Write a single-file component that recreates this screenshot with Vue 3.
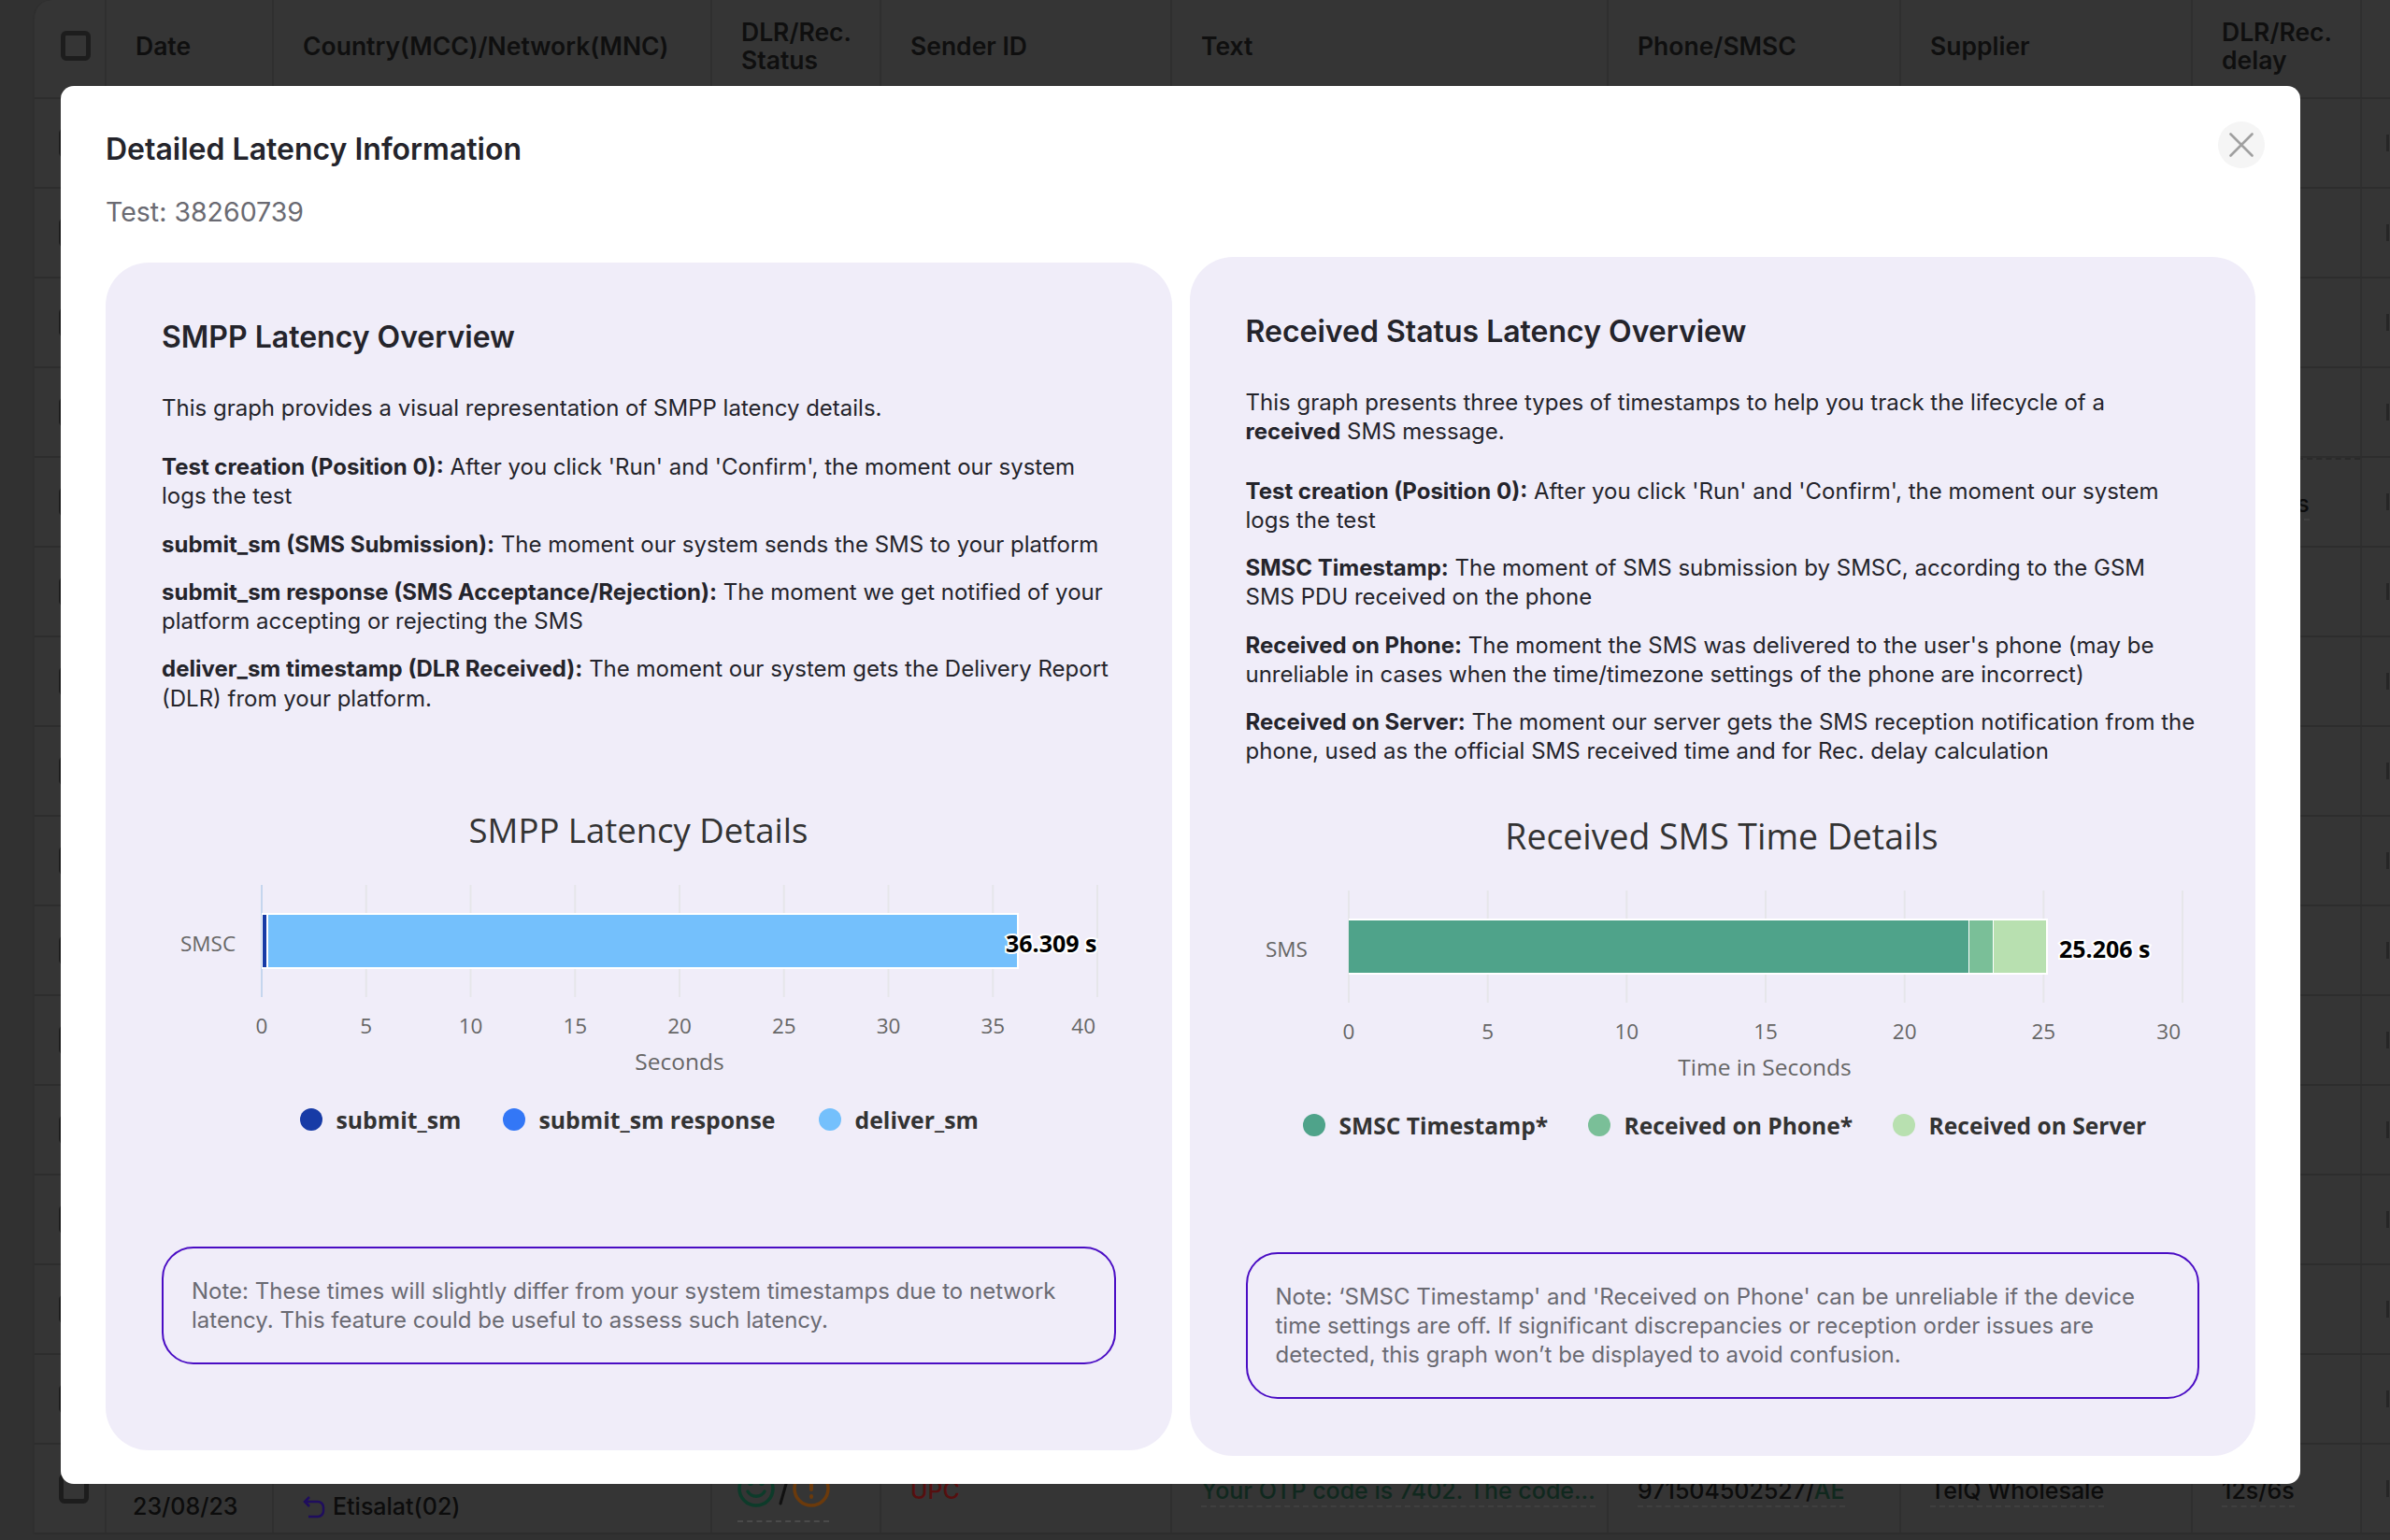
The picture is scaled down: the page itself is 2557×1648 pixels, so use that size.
<template>
  <div class="page">
    <!-- dimmed table behind the dialog -->
    <div class="table">
      <div class="table__head table__grid">
        <div class="cell cell--check"><span class="checkbox" /></div>
        <div v-for="col in columns" :key="col" class="cell">{{ col }}</div>
      </div>
      <div v-for="row in rows" :key="row.id" class="table__row table__grid">
        <div class="cell cell--check"><span class="checkbox" /></div>
        <div class="cell" />
        <div class="cell" />
        <div class="cell" />
        <div class="cell" />
        <div class="cell" />
        <div class="cell" />
        <div class="cell" />
        <div class="cell" :class="{ 'cell--dashed-top': row.delay }">
          <span v-if="row.delay" class="dotted">{{ row.delay }}</span>
        </div>
        <div class="cell cell--tail"><span class="tail" /></div>
      </div>
      <div class="table__row table__grid">
        <div class="cell cell--check"><span class="checkbox" /></div>
        <div class="cell cell--low">23/08/23</div>
        <div class="cell cell--low cell--network">
          <svg width="26" height="26" viewBox="0 0 26 26" fill="none" stroke="#1f0d5e" stroke-width="2.5">
            <path d="M8 2 3 7l5 5M3 7h14a6 6 0 0 1 6 6v4a6 6 0 0 1-6 6H7" />
          </svg>
          Etisalat(02)
        </div>
        <div class="cell cell--status">
          <svg width="100" height="40" viewBox="0 0 100 40" fill="none" stroke-width="3.5" stroke-linecap="round">
            <circle cx="20" cy="20" r="18" stroke="#0d3b2a" />
            <path d="M11 23c4 7 14 7 18 0" stroke="#0d3b2a" />
            <circle cx="14" cy="14" r="1.2" stroke="#0d3b2a" />
            <circle cx="26" cy="14" r="1.2" stroke="#0d3b2a" />
            <path d="M54 8 46 36" stroke="#111" stroke-width="3" />
            <circle cx="79" cy="20" r="18" stroke="#6b3a0c" />
            <path d="M79 10v11M79 28v1" stroke="#6b3a0c" stroke-width="4" />
          </svg>
        </div>
        <div class="cell cell--sender">UPC</div>
        <div class="cell"><span class="dotted dotted--green">Your OTP code is 7402. The code...</span></div>
        <div class="cell"><span class="dotted">971504502527/<em>AE</em></span></div>
        <div class="cell"><span class="dotted">TelQ Wholesale</span></div>
        <div class="cell"><span class="dotted">12s/6s</span></div>
        <div class="cell cell--tail"><span class="tail" /></div>
      </div>
    </div>

    <div class="modal">
      <button class="modal__close" type="button">
        <svg width="26" height="26" viewBox="0 0 26 26" stroke="#a0a0a0" stroke-width="2.6" stroke-linecap="round">
          <path d="M1.5 1.5l23 23M24.5 1.5l-23 23" />
        </svg>
      </button>
      <h1 class="modal__title">Detailed Latency Information</h1>
      <div class="modal__sub">Test: 38260739</div>

      <div class="modal__cards">
        <section v-for="card in cards" :key="card.id" class="card" :class="`card--${card.id}`">
          <h2 class="card__title">{{ card.title }}</h2>
          <p class="card__intro">
            <template v-for="part in card.intro" :key="part.t">
              <strong v-if="part.b">{{ part.t }}</strong><template v-else>{{ part.t }}</template>
            </template>
          </p>
          <p v-for="item in card.items" :key="item.b" class="card__item">
            <strong>{{ item.b }}</strong> {{ item.t }}
          </p>

          <svg class="chart" width="1018" height="402" viewBox="0 0 1018 402">
            <text class="chart__title" x="509" y="60">{{ card.chart.title }}</text>
            <line
              v-for="(tick, i) in card.chart.ticks"
              :key="tick"
              :x1="tickX(card.chart, i)"
              :x2="tickX(card.chart, i)"
              y1="119"
              y2="239"
              :stroke="i === 0 ? card.chart.axisColor : '#e6e6ea'"
              stroke-width="2"
            />
            <text class="chart__axis" :x="card.chart.catX" y="181">{{ card.chart.cat }}</text>
            <rect
              :x="card.chart.x0"
              y="149"
              :width="card.chart.barEnd - card.chart.x0"
              height="60"
              fill="#fff"
            />
            <rect
              v-for="seg in card.chart.segments"
              :key="seg.color"
              :x="seg.from"
              y="151"
              :width="seg.to - seg.from"
              height="56"
              :fill="seg.color"
            />
            <text
              v-for="(tick, i) in card.chart.ticks"
              :key="`t${tick}`"
              class="chart__tick"
              :class="{ 'chart__tick--end': i === card.chart.ticks.length - 1 }"
              :x="tickX(card.chart, i)"
              y="269"
            >{{ tick }}</text>
            <text class="chart__name" :x="card.chart.nameCenter" y="307">{{ card.chart.name }}</text>
            <text class="chart__value" :x="card.chart.valueX" y="181">{{ card.chart.value }}</text>
            <g v-for="entry in card.chart.legend" :key="entry.label">
              <circle :cx="entry.x" cy="370" r="12" :fill="entry.color" />
              <text class="chart__legend" :x="entry.x + 26.5" y="370">{{ entry.label }}</text>
            </g>
          </svg>

          <div class="card__note">{{ card.note }}</div>
        </section>
      </div>
    </div>
  </div>
</template>

<script setup>
const columns = [
  'Date',
  'Country(MCC)/Network(MNC)',
  'DLR/Rec. Status',
  'Sender ID',
  'Text',
  'Phone/SMSC',
  'Supplier',
  'DLR/Rec. delay',
  ''
];

const rows = Array.from({ length: 15 }, (_, i) => ({
  id: i,
  delay: i === 4 ? '24s/18s' : ''
}));

const cards = [
  {
    id: 'smpp',
    title: 'SMPP Latency Overview',
    intro: [{ t: 'This graph provides a visual representation of SMPP latency details.' }],
    items: [
      { b: 'Test creation (Position 0):', t: "After you click 'Run' and 'Confirm', the moment our system logs the test" },
      { b: 'submit_sm (SMS Submission):', t: 'The moment our system sends the SMS to your platform' },
      { b: 'submit_sm response (SMS Acceptance/Rejection):', t: 'The moment we get notified of your platform accepting or rejecting the SMS' },
      { b: 'deliver_sm timestamp (DLR Received):', t: 'The moment our system gets the Delivery Report (DLR) from your platform.' }
    ],
    chart: {
      title: 'SMPP Latency Details',
      cat: 'SMSC',
      catX: 19,
      name: 'Seconds',
      nameCenter: 553,
      value: '36.309 s',
      valueX: 902,
      x0: 106,
      step: 111.75,
      barEnd: 916,
      axisColor: '#c5d6ee',
      ticks: [0, 5, 10, 15, 20, 25, 30, 35, 40],
      segments: [
        { from: 107, to: 111, color: '#173ba6' },
        { from: 111, to: 113, color: '#fff' },
        { from: 113, to: 914, color: '#74c0fc' }
      ],
      legend: [
        { x: 159, label: 'submit_sm', color: '#173ba6' },
        { x: 376, label: 'submit_sm response', color: '#3377f6' },
        { x: 714, label: 'deliver_sm', color: '#74c0fc' }
      ]
    },
    note: 'Note: These times will slightly differ from your system timestamps due to network latency. This feature could be useful to assess such latency.'
  },
  {
    id: 'received',
    title: 'Received Status Latency Overview',
    intro: [
      { t: 'This graph presents three types of timestamps to help you track the lifecycle of a ' },
      { t: 'received', b: true },
      { t: ' SMS message.' }
    ],
    items: [
      { b: 'Test creation (Position 0):', t: "After you click 'Run' and 'Confirm', the moment our system logs the test" },
      { b: 'SMSC Timestamp:', t: 'The moment of SMS submission by SMSC, according to the GSM SMS PDU received on the phone' },
      { b: 'Received on Phone:', t: "The moment the SMS was delivered to the user's phone (may be unreliable in cases when the time/timezone settings of the phone are incorrect)" },
      { b: 'Received on Server:', t: 'The moment our server gets the SMS reception notification from the phone, used as the official SMS received time and for Rec. delay calculation' }
    ],
    chart: {
      title: 'Received SMS Time Details',
      cat: 'SMS',
      catX: 21,
      name: 'Time in Seconds',
      nameCenter: 555,
      value: '25.206 s',
      valueX: 870,
      x0: 110,
      step: 148.67,
      barEnd: 858,
      axisColor: '#e6e6ea',
      ticks: [0, 5, 10, 15, 20, 25, 30],
      segments: [
        { from: 110, to: 773, color: '#4fa38a' },
        { from: 774, to: 799, color: '#7abf98' },
        { from: 800, to: 856, color: '#b8e0b0' }
      ],
      legend: [
        { x: 73, label: 'SMSC Timestamp*', color: '#4fa38a' },
        { x: 378, label: 'Received on Phone*', color: '#7abf98' },
        { x: 704, label: 'Received on Server', color: '#b8e0b0' }
      ]
    },
    note: "Note: ‘SMSC Timestamp' and 'Received on Phone' can be unreliable if the device time settings are off. If significant discrepancies or reception order issues are detected, this graph won’t be displayed to avoid confusion."
  }
];

const tickX = (chart, i) => chart.x0 + chart.step * i;
</script>

<style scoped>
.page {
  position: relative;
  width: 2557px;
  height: 1648px;
  overflow: hidden;
  background: #313131;
  font-family: Inter, "Liberation Sans", sans-serif;
}

.table {
  margin-left: 35px;
  background: #353535;
  border-left: 2px solid #2f2f2f;
  border-top-left-radius: 20px;
}

.table__grid {
  display: grid;
  grid-template-columns: 77px 179px 469px 181px 311px 467px 313px 312px 181px 1fr;
  border-bottom: 2px solid #2d2d2d;
}

.table__head {
  height: 104px;
  font-size: 26.5px;
  line-height: 30px;
  font-weight: 600;
  color: #0f0f0f;
}

.table__row {
  height: 94px;
  font-size: 25px;
  font-weight: 500;
  line-height: 28px;
  color: #0c0c0c;
}

.cell {
  display: flex;
  align-items: center;
  padding: 0 24px 0 31px;
  border-right: 2px solid #2f2f2f;
}

.table__head .cell {
  padding-bottom: 6px;
}

.table__row .cell:nth-child(n + 2) {
  white-space: nowrap;
}

.cell--check {
  padding: 0 0 0 26px;
}

.table__head .cell--check {
  padding-left: 28px;
}

.checkbox {
  display: block;
  width: 32px;
  height: 32px;
  box-sizing: border-box;
  border: 5px solid #1d1d1d;
  border-radius: 6px;
}

.cell--low {
  align-items: flex-end;
  padding-bottom: 14px;
  padding-left: 28px;
}

.cell--network {
  gap: 7px;
  padding-left: 30px;
}

.cell--status {
  position: relative;
  align-items: flex-start;
  padding-top: 27px;
  padding-left: 27px;
}

.cell--status::after {
  content: "";
  position: absolute;
  left: 27px;
  top: 81px;
  width: 98px;
  border-top: 2px dashed #4a4a4a;
}

.table__row .cell--sender {
  padding-top: 4px;
  color: #560f0f;
}

.cell--tail {
  border-right: 0;
  padding: 0 0 0 26px;
}

.cell--dashed-top {
  position: relative;
}

.cell--dashed-top::before {
  content: "";
  position: absolute;
  left: 0;
  right: 0;
  top: 0;
  border-top: 2px dashed #2a2a2a;
}

.tail {
  display: block;
  width: 3px;
  height: 18px;
  background: #262626;
}

.dotted {
  margin-top: 8px;
  padding-bottom: 2px;
  border-bottom: 2px dashed #3f3f3f;
}

.dotted em {
  font-style: normal;
  color: #10281e;
}

.dotted--green {
  color: #10281e;
}

.modal {
  position: absolute;
  left: 65px;
  top: 92px;
  box-sizing: border-box;
  width: 2396px;
  height: 1496px;
  padding: 48px 48px 0;
  background: #fff;
  border-radius: 14px;
}

.modal__close {
  position: absolute;
  right: 38px;
  top: 38px;
  display: flex;
  align-items: center;
  justify-content: center;
  width: 50px;
  height: 50px;
  padding: 0;
  border: 0;
  border-radius: 50%;
  background: #f5f5f5;
}

.modal__title {
  margin: 0;
  font-size: 32px;
  line-height: 40px;
  font-weight: 600;
  color: #24242b;
}

.modal__sub {
  margin-top: 29px;
  font-size: 28.5px;
  line-height: 36px;
  color: #6a6a72;
}

.modal__cards {
  display: flex;
  align-items: center;
  gap: 19px;
  margin-top: 30px;
}

.card {
  flex: 1;
  min-width: 0;
  box-sizing: border-box;
  padding: 60px 60px 61px;
  background: #f0edf9;
  border-radius: 46px;
  font-size: 24px;
  line-height: 31.25px;
  color: #24242b;
}

.card__title {
  margin: 0 0 40px;
  font-size: 32px;
  line-height: 40px;
  font-weight: 600;
}

.card__intro {
  margin: 0 0 32px;
}

.card__item {
  margin: 0 0 20px;
}

.card__item strong,
.card__intro strong {
  font-weight: 700;
}

.chart {
  display: block;
  margin-top: 65px;
  font-family: "Open Sans", sans-serif;
}

.card--smpp .chart {
  margin-left: 1px;
}

.card--received .chart {
  margin-top: -6px;
}

.chart text {
  dominant-baseline: central;
}

.chart__title {
  font-size: 36.5px;
  fill: #333;
  text-anchor: middle;
}

.card--received .chart__title {
  font-size: 37.4px;
}

.chart__axis,
.chart__tick {
  font-size: 22.5px;
  fill: #666;
}

.chart__name {
  font-size: 24.5px;
  fill: #666;
}

.chart__tick,
.chart__name {
  text-anchor: middle;
}

.chart__tick--end {
  text-anchor: end;
  transform: translateX(-2px);
}

.chart__value {
  font-size: 25px;
  font-weight: 700;
  fill: #000;
  stroke: #fff;
  stroke-width: 4px;
  paint-order: stroke;
}

.chart__legend {
  font-size: 24.8px;
  font-weight: 700;
  fill: #333;
}

.card--received .chart__legend {
  font-size: 24.6px;
}

.card__note {
  box-sizing: border-box;
  margin-top: 104px;
  padding: 30px;
  border: 2px solid #4a0dc4;
  border-radius: 34px;
  line-height: 31px;
  color: #6a6a72;
}

.card--smpp .card__note {
  margin-bottom: 31px;
}
</style>

<style>
html,
body {
  margin: 0;
  background: #313131;
  overflow: hidden;
}
</style>
